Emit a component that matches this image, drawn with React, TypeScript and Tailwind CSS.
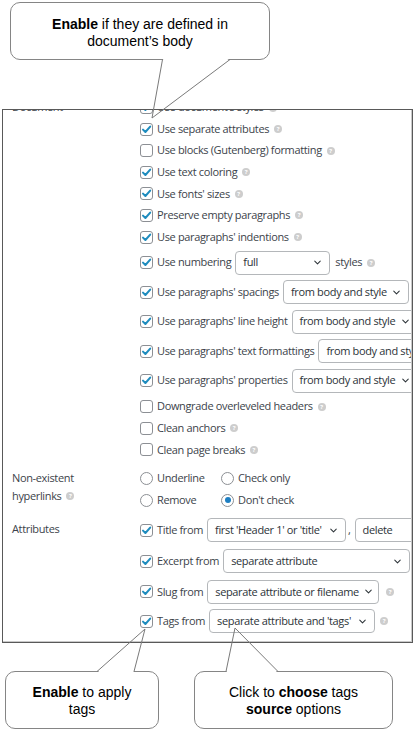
import { ChevronDown } from "lucide-react";
import type { ReactNode } from "react";

const FONT = "[font-family:'Open_Sans',sans-serif]";

function Help() {
  return (
    <span className="ml-[5px] inline-flex h-[8px] w-[8px] shrink-0 items-center justify-center rounded-full bg-[#cdcdcd] text-[6px] font-bold leading-none tracking-normal text-white">
      ?
    </span>
  );
}

function Check({ checked }: { checked: boolean }) {
  return (
    <span className="inline-flex h-[13px] w-[13px] shrink-0 items-center justify-center rounded-[3px] border border-[#8c8f94] bg-white">
      {checked && (
        <svg width="11" height="11" viewBox="0 0 11 11">
          <path d="M2 5.6 L4.4 8 L9.2 2.6" fill="none" stroke="#1e8cbe" strokeWidth="2" strokeLinecap="round" strokeLinejoin="round" />
        </svg>
      )}
    </span>
  );
}

function Radio({ checked }: { checked?: boolean }) {
  return (
    <span className="inline-flex h-[13px] w-[13px] shrink-0 items-center justify-center rounded-full border border-[#8c8f94] bg-white">
      {checked && <span className="h-[6px] w-[6px] rounded-full bg-[#1e7fc2]" />}
    </span>
  );
}

function Select({ value, w }: { value: string; w: string }) {
  return (
    <span className={`ml-[4px] flex h-[24px] shrink-0 items-center justify-between rounded-[4px] border border-[#b4b7ba] bg-white pl-[7px] pr-[6px] text-[#2c3338] ${w}`}>
      <span className="whitespace-nowrap">{value}</span>
      <ChevronDown size={11} strokeWidth={2.2} className="ml-[4px] shrink-0 text-[#2c3338]" />
    </span>
  );
}

function CheckRow({ label, checked, help = true }: { label: string; checked: boolean; help?: boolean }) {
  return (
    <div className="flex h-[21.6px] items-center whitespace-nowrap">
      <Check checked={checked} />
      <span className="ml-[4px]">{label}</span>
      {help && <Help />}
    </div>
  );
}

function SelectRow({ label, h = "h-[29.5px]", children }: { label: string; h?: string; children: ReactNode }) {
  return (
    <div className={`flex items-center whitespace-nowrap ${h}`}>
      <Check checked />
      <span className="ml-[4px]">{label}</span>
      {children}
    </div>
  );
}

function Callout({ className, children }: { className: string; children: ReactNode }) {
  return (
    <div className={`flex flex-col items-center justify-center rounded-[10px] border border-[#858585] bg-white text-center text-[14px] leading-[17px] text-black [font-family:'Liberation_Sans',Arial,sans-serif] ${className}`}>
      {children}
    </div>
  );
}

export default function App() {
  return (
    <div className="relative h-[731px] w-[414px] overflow-hidden bg-white">
      <div className="pl-[10px] pt-[2px]">
        <Callout className="h-[58px] w-[260px] pt-[4px]">
          <div>
            <b>Enable</b> if they are defined in
          </div>
          <div>document’s body</div>
        </Callout>
      </div>

      <div className={`ml-[2px] mt-[49px] h-[534px] w-[411px] overflow-hidden border border-[#595959] text-[11px] tracking-[-0.35px] text-[#3c434a] ${FONT}`}>
        <div className="h-full overflow-hidden border-b border-r border-[#c9c9c9]">
          <div className="mt-[-13.3px] flex">
            <div className="w-[137px] shrink-0 pl-[9px]">
              <div className="flex h-[21.6px] items-center">Document</div>
            </div>
            <div className="flex min-w-0 flex-col">
              <CheckRow label="Use document's styles" checked />
              <CheckRow label="Use separate attributes" checked />
              <CheckRow label="Use blocks (Gutenberg) formatting" checked={false} />
              <CheckRow label="Use text coloring" checked />
              <CheckRow label="Use fonts' sizes" checked />
              <CheckRow label="Preserve empty paragraphs" checked />
              <CheckRow label="Use paragraphs' indentions" checked />
              <SelectRow label="Use numbering">
                <Select value="full" w="w-[95px]" />
                <span className="ml-[5px]">styles</span>
                <Help />
              </SelectRow>
              <SelectRow label="Use paragraphs' spacings">
                <Select value="from body and style" w="w-[126px]" />
              </SelectRow>
              <SelectRow label="Use paragraphs' line height">
                <Select value="from body and style" w="w-[126px]" />
              </SelectRow>
              <SelectRow label="Use paragraphs' text formattings">
                <Select value="from body and style" w="w-[126px]" />
              </SelectRow>
              <SelectRow label="Use paragraphs' properties">
                <Select value="from body and style" w="w-[126px]" />
              </SelectRow>
              <div className="h-[0.5px]" />
              <CheckRow label="Downgrade overleveled headers" checked={false} />
              <CheckRow label="Clean anchors" checked={false} />
              <CheckRow label="Clean page breaks" checked={false} />
            </div>
          </div>

          <div className="mt-[6.7px] flex">
            <div className="w-[137px] shrink-0 pl-[9px] pt-[2px] leading-[18px]">
              <div>Non-existent</div>
              <div className="flex items-center">
                hyperlinks
                <Help />
              </div>
            </div>
            <div className="grid grid-cols-[81px_100px]">
              {[
                ["Underline", false],
                ["Check only", false],
                ["Remove", false],
                ["Don't check", true],
              ].map(([label, on]) => (
                <div key={label as string} className="flex h-[22px] items-center whitespace-nowrap">
                  <Radio checked={on as boolean} />
                  <span className="ml-[4px]">{label}</span>
                </div>
              ))}
            </div>
          </div>

          <div className="mt-[4px] flex">
            <div className="w-[137px] shrink-0 pl-[9px] pt-[6px]">Attributes</div>
            <div className="flex min-w-0 flex-col">
              <SelectRow label="Title from" h="h-[30px]">
                <Select value="first 'Header 1' or 'title'" w="w-[139px]" />
                <span className="ml-[2px] self-end pb-[7px]">,</span>
                <Select value="delete" w="w-[90px]" />
              </SelectRow>
              <SelectRow label="Excerpt from" h="h-[32px]">
                <Select value="separate attribute" w="w-[187px]" />
              </SelectRow>
              <SelectRow label="Slug from" h="h-[29px]">
                <Select value="separate attribute or filename" w="w-[172px]" />
                <span className="ml-[2px]" />
                <Help />
              </SelectRow>
              <SelectRow label="Tags from" h="h-[30px]">
                <Select value="separate attribute and 'tags'" w="w-[166px]" />
                <Help />
              </SelectRow>
            </div>
          </div>
        </div>
      </div>

      <div className="mt-[28px] flex">
        <Callout className="ml-[5px] h-[58px] w-[154px] pt-[2px]">
          <div>
            <b>Enable</b> to apply
          </div>
          <div>tags</div>
        </Callout>
        <Callout className="ml-[35px] h-[58px] w-[199px] pt-[2px]">
          <div>
            Click to <b>choose</b> tags
          </div>
          <div>
            <b>source</b> options
          </div>
        </Callout>
      </div>

      <svg className="pointer-events-none absolute left-0 top-0" width="414" height="731" viewBox="0 0 414 731">
        <polygon points="162.5,58.5 229.5,58.5 200,80 175,80" fill="white" />
        <line x1="162.5" y1="59.5" x2="152" y2="118" stroke="#7a7a7a" strokeWidth="1" />
        <line x1="230" y1="59.5" x2="152" y2="118" stroke="#7a7a7a" strokeWidth="1" />

        <polygon points="97.5,672.5 133.5,672.5 136,662 109,662" fill="white" />
        <line x1="97" y1="671.5" x2="145" y2="629" stroke="#7a7a7a" strokeWidth="1" />
        <line x1="134" y1="671.5" x2="145" y2="629" stroke="#7a7a7a" strokeWidth="1" />

        <polygon points="226.5,672.5 277.5,672.5 266,662 228.5,662" fill="white" />
        <line x1="226" y1="671.5" x2="235" y2="628" stroke="#7a7a7a" strokeWidth="1" />
        <line x1="278" y1="671.5" x2="235" y2="628" stroke="#7a7a7a" strokeWidth="1" />
      </svg>
    </div>
  );
}
